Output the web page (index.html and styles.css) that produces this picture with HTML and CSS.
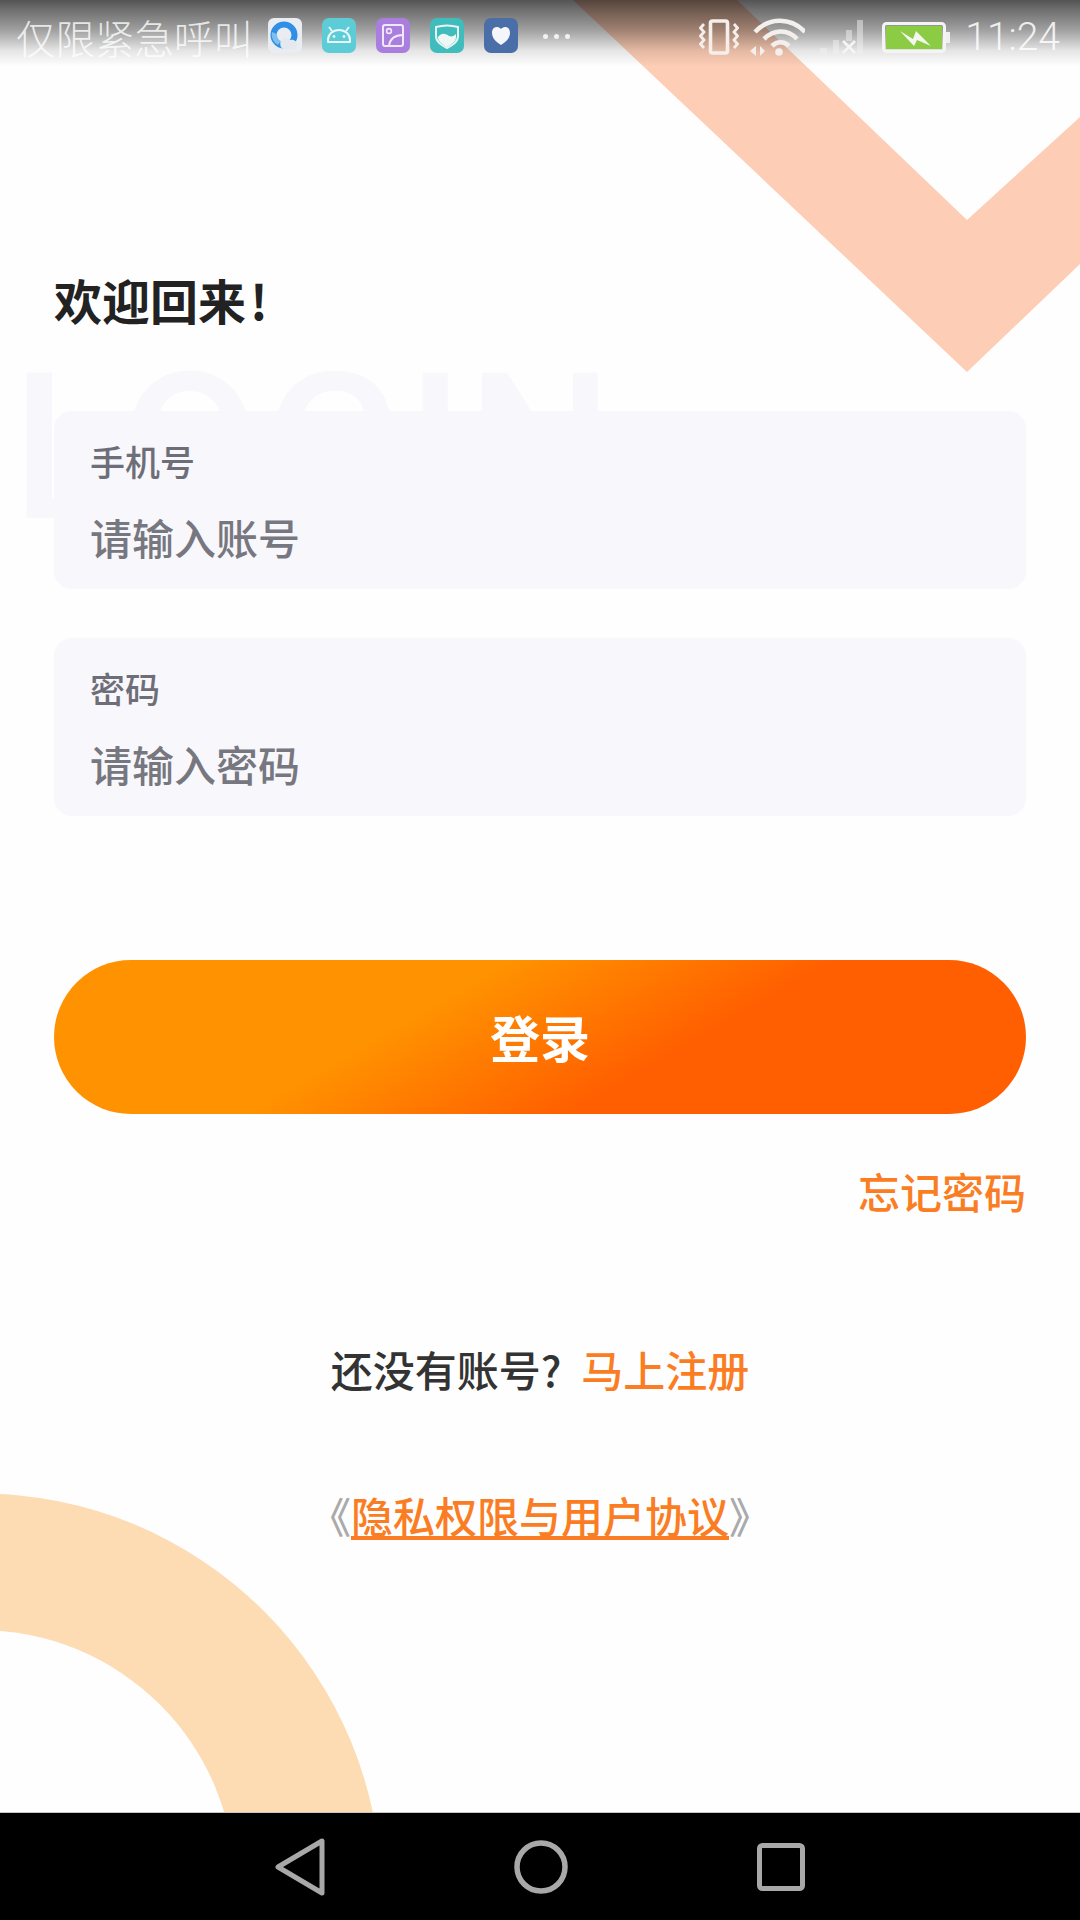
FILE: index.html
```html
<!DOCTYPE html>
<html lang="zh-CN">

<head>
  <meta charset="UTF-8">
  <title>登录</title>
  <link rel="stylesheet" href="styles.css">
</head>

<body>
  <div class="screen">
    <svg class="deco-chevron" width="1080" height="380" viewBox="0 0 1080 380">
      <polygon points="573,0 737,0 967,220 1080,117 1080,264 967,372" fill="#fdcdb5" />
    </svg>
    <svg class="deco-ring" width="400" height="330" viewBox="0 0 400 330">
      <circle cx="-20" cy="401" r="401.5" fill="#fddcb4" />
      <circle cx="-20" cy="391" r="254.8" fill="#fefefe" />
    </svg>

    <div class="status-bar">
      <span class="carrier">仅限紧急呼叫</span>
      <div class="app-icons">
        <svg class="app-icon" viewBox="0 0 34 35">
          <rect width="34" height="35" rx="6" fill="#e9ecf1" />
          <circle cx="16" cy="17" r="10.5" fill="none" stroke="#2f8fe6" stroke-width="6" />
          <path d="M10 27c-5-3-7-8-6-13l5 2c0 3 1 6 4 7z" fill="#7cc0ef" />
          <path d="M14 21c3-2 7-1 8 1 3-1 7 1 7 4s-2 5-5 5H16c-4 0-5-7-2-10z" fill="#e4e9ef" />
        </svg>
        <svg class="app-icon" viewBox="0 0 34 35">
          <rect width="34" height="35" rx="7" fill="#5ccdd6" />
          <path d="M6 24v-2c0-6 5-10 11-10s11 4 11 10v2z" fill="none" stroke="#e9f8f9" stroke-width="2" stroke-linejoin="round" />
          <path d="M10 13l-3-4M24 13l3-4" stroke="#e9f8f9" stroke-width="2" />
          <circle cx="12" cy="18.5" r="1.4" fill="#e9f8f9" />
          <circle cx="22" cy="18.5" r="1.4" fill="#e9f8f9" />
        </svg>
        <svg class="app-icon" viewBox="0 0 34 35">
          <rect width="34" height="35" rx="7" fill="#a97ede" />
          <rect x="7" y="7" width="20" height="21" rx="2" fill="none" stroke="#f0e8fa" stroke-width="2" />
          <circle cx="13" cy="13" r="2.4" fill="none" stroke="#f0e8fa" stroke-width="1.6" />
          <path d="M13 28c1-8 6-11 14-11" fill="none" stroke="#f0e8fa" stroke-width="2" />
        </svg>
        <svg class="app-icon" viewBox="0 0 34 35">
          <rect width="34" height="35" rx="7" fill="#40bcbc" />
          <path d="M6 9c7-2 15-2 22 0v9c0 6-5 9-11 12-6-3-11-6-11-12z" fill="none" stroke="#e6f5f3" stroke-width="2" />
          <path d="M8 19c4-5 8-3 11-1 3 1 5 0 7-2v3c0 5-4 7-9 10-5-3-9-5-9-10z" fill="#eef7f5" />
        </svg>
        <svg class="app-icon" viewBox="0 0 34 35">
          <rect width="34" height="35" rx="7" fill="#4a6ea8" />
          <path d="M17 27c-5-3-9-7-9-12 0-4 2-6 5-6 2 0 3 1 4 2 1-1 2-2 4-2 3 0 5 2 5 6 0 5-4 9-9 12z" fill="#f4f6fa" />
        </svg>
      </div>
      <div class="more-dots"><i></i><i></i><i></i></div>
      <div class="status-right">
        <svg class="ic-vibrate" width="40" height="36" viewBox="0 0 40 36">
          <rect x="11.5" y="2" width="17" height="32" rx="2" fill="none" stroke="#f5eeea" stroke-width="3.6" />
          <path d="M5 5L1.500 9l3.500 4-3.500 4 3.500 4-3.500 4 3.500 4M35 5l3.500 4-3.500 4 3.500 4-3.500 4 3.500 4-3.500 4" fill="none" stroke="#f5eeea" stroke-width="2.8" />
        </svg>
        <svg class="ic-wifi" width="56" height="38" viewBox="0 0 56 38">
          <path d="M6 14c14-15 36-15 50 0M15 21c10-10 24-10 33 0M23 28c5-5 12-5 17 0" fill="none" stroke="#f3efec" stroke-width="4.600" />
          <circle cx="30" cy="34" r="3.800" fill="#f3efec" />
          <path d="M7 28l-6 5 6 5zM11 28l5 5-5 5z" fill="#f3efec" />
        </svg>
        <svg class="ic-signal" width="43" height="34" viewBox="0 0 43 34">
          <path d="M0 28h7v6H0zM13 20h6v14h-6zM26 10h6v11h-6zM37 0h6v34h-6z" fill="#f0f0f0" opacity="0.5" />
          <path d="M23 21l12 12M35 21L23 33" stroke="#f5f5f5" stroke-width="2.800" />
        </svg>
        <svg class="ic-battery" width="68" height="31" viewBox="0 0 68 31">
          <rect x="1.500" y="1.500" width="61" height="28" rx="3" fill="none" stroke="#f4f4f4" stroke-width="3" />
          <rect x="4" y="4" width="56" height="23" fill="#8ccb44" />
          <rect x="64" y="10" width="4" height="11" fill="#f0f0f0" />
          <path d="M18 9l13 8 3-8 15 15-14-6-3 6z" fill="#f4f7ee" />
        </svg>
        <span class="clock">11:24</span>
      </div>
    </div>

    <main class="login">
      <h1 class="welcome">欢迎回来<span class="bang">!</span></h1>
      <div class="watermark">LOGIN</div>

      <div class="field">
        <label for="phone">手机号</label>
        <input type="text" id="phone" placeholder="请输入账号">
      </div>
      <div class="field">
        <label for="password">密码</label>
        <input type="text" id="password" placeholder="请输入密码">
      </div>

      <button class="submit">登录</button>
      <a class="forgot">忘记密码</a>

      <p class="signup">还没有账号?<a>马上注册</a></p>
      <p class="agreement">《<a>隐私权限与用户协议</a>》</p>
    </main>

    <nav class="nav-bar">
      <svg width="50" height="58" viewBox="0 0 50 58">
        <path d="M47 3v52L3 29z" fill="none" stroke="#a8a8a8" stroke-width="5" stroke-linejoin="round" />
      </svg>
      <svg width="54" height="54" viewBox="0 0 54 54">
        <circle cx="27" cy="27" r="24" fill="none" stroke="#a8a8a8" stroke-width="5.500" />
      </svg>
      <svg width="48" height="48" viewBox="0 0 48 48">
        <rect x="2.500" y="2.500" width="43" height="43" rx="3" fill="none" stroke="#a8a8a8" stroke-width="5" />
      </svg>
    </nav>
  </div>
</body>

</html>
```

FILE: styles.css
```css
* {
  box-sizing: border-box;
}

body {
  margin: 0;
  background: #fff;
  font-family: "Noto Sans CJK SC", "Noto Sans", sans-serif;
}

.screen {
  position: relative;
  width: 1080px;
  height: 1920px;
  display: flex;
  flex-direction: column;
  overflow: hidden;
  background: #fefefe;
}

.deco-chevron {
  position: absolute;
  top: 0;
  left: 0;
}

.deco-ring {
  position: absolute;
  left: 0;
  top: 1494px;
}

/* status bar */
.status-bar {
  position: relative;
  height: 72px;
  display: flex;
  align-items: flex-start;
  padding: 18px 20px 0 16px;
  background: linear-gradient(rgba(0, 0, 0, 0.67), rgba(0, 0, 0, 0.56) 14%, rgba(0, 0, 0, 0.37) 42%, rgba(0, 0, 0, 0.1) 70%, rgba(0, 0, 0, 0) 92%);
  color: rgba(255, 255, 255, 0.8);
}

.carrier {
  width: 252px;
  font-size: 39.5px;
  font-weight: 300;
  line-height: 38px;
  white-space: nowrap;
}

.app-icons {
  display: flex;
  gap: 20px;
}

.app-icon {
  width: 34px;
  height: 35px;
  display: block;
}

.more-dots {
  display: flex;
  gap: 6px;
  margin: 16px 0 0 25px;
}

.more-dots i {
  width: 5px;
  height: 5px;
  border-radius: 50%;
  background: #f2f2f2;
}

.status-right {
  display: flex;
  align-items: center;
  margin-left: auto;
}

.ic-vibrate {
  margin-right: 10px;
}

.ic-wifi {
  margin-right: 15px;
}

.ic-signal {
  margin-right: 19px;
}

.ic-battery {
  margin-right: 15px;
}

.clock {
  font-family: Roboto, sans-serif;
  font-size: 39px;
  font-weight: 300;
  line-height: 36px;
  color: rgba(255, 255, 255, 0.85);
}

/* form */
.login {
  position: relative;
  flex: 1;
  display: flex;
  flex-direction: column;
  padding: 193px 54px 0;
}

.welcome {
  margin: 0 0 78px;
  font-size: 48px;
  font-weight: 700;
  line-height: 68px;
  color: #222;
}

.bang {
  margin-left: 4px;
}

.watermark {
  position: absolute;
  left: 12px;
  top: 261px;
  font-family: Roboto, sans-serif;
  font-size: 205px;
  font-weight: 500;
  line-height: 230px;
  letter-spacing: 3px;
  color: #f8f7fb;
}

.field {
  position: relative;
  height: 178px;
  margin-bottom: 49px;
  padding: 28px 36px 0;
  border-radius: 18px;
  background: #f8f7fc;
}

.field label {
  display: block;
  font-size: 35px;
  font-weight: 500;
  line-height: 44px;
  color: #6e6e78;
}

.field input {
  display: block;
  width: 100%;
  height: 60px;
  margin-top: 24px;
  padding: 0;
  border: none;
  outline: none;
  background: none;
  font: inherit;
  font-size: 42px;
  font-weight: 500;
  line-height: 60px;
}

.field input::placeholder {
  color: #77777f;
  opacity: 1;
}

.submit {
  height: 154px;
  margin-top: 95px;
  border: none;
  border-radius: 77px;
  background: linear-gradient(150deg, #ff9200 37%, #ff5f00 63%);
  color: #fff;
  font: inherit;
  font-size: 50px;
  font-weight: 700;
  line-height: 60px;
  padding-bottom: 4px;
}

.forgot {
  align-self: flex-end;
  margin-top: 47px;
  font-size: 42px;
  font-weight: 500;
  line-height: 60px;
  color: #fb7d23;
}

.signup {
  margin: 118px 0 0;
  text-align: center;
  font-size: 42px;
  font-weight: 500;
  line-height: 60px;
  color: #333;
}

.signup a {
  margin-left: 20px;
  color: #fb7d23;
}

.agreement {
  margin: 86px 0 0;
  text-align: center;
  font-size: 42px;
  font-weight: 500;
  line-height: 60px;
  color: #aaa;
}

.agreement a {
  color: #fb7d23;
  text-decoration: underline;
}

/* nav bar */
.nav-bar {
  position: relative;
  height: 108px;
  display: flex;
  align-items: center;
  justify-content: center;
  gap: 189px;
  border-top: 1px solid #c8c8c8;
  background: #000;
}
```
